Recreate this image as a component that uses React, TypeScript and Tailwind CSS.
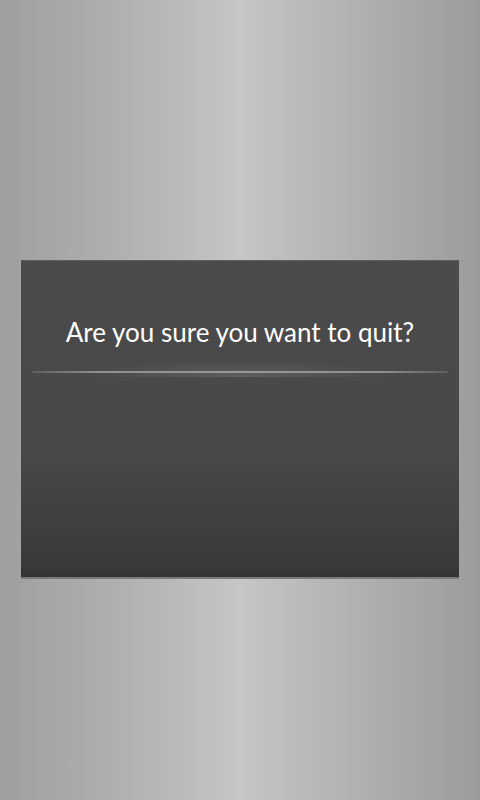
export default function App() {
  return (
    <main className="h-[800px] w-full pt-[38px] flex items-center justify-center bg-[linear-gradient(to_right,#9f9f9f_0%,#b0b0b0_25%,#c5c6c6_50%,#b0b0b0_75%,#9c9c9c_100%)] font-['Lato','Noto_Sans',sans-serif]">
      {/* quit dialog */}
      <div className="w-[438px] h-[319px] flex flex-col bg-[linear-gradient(to_bottom,#4b4b4b_0%,#484848_60%,#3a3a3a_96%,#333333_100%)] border-t border-[#5c5c5c] border-b-2 border-b-[#7a7a7a]">
        <div className="pt-[55px] pb-[23px] relative">
          <h1 className="text-center text-white text-[26px] leading-[32px]">
            Are you sure you want to quit?
          </h1>
          <div className="absolute left-[60px] right-[60px] bottom-[-6px] h-[18px] bg-[radial-gradient(ellipse_at_center_bottom,rgba(120,120,120,0.45),rgba(75,75,75,0)_70%)]"></div>
        </div>
        <div className="mx-[11px] h-[2px] bg-[linear-gradient(to_right,rgba(140,140,140,0.3),#8e8e8e_15%,#a8a8a8_50%,#8e8e8e_85%,rgba(140,140,140,0.3))]"></div>
      </div>
    </main>
  );
}
